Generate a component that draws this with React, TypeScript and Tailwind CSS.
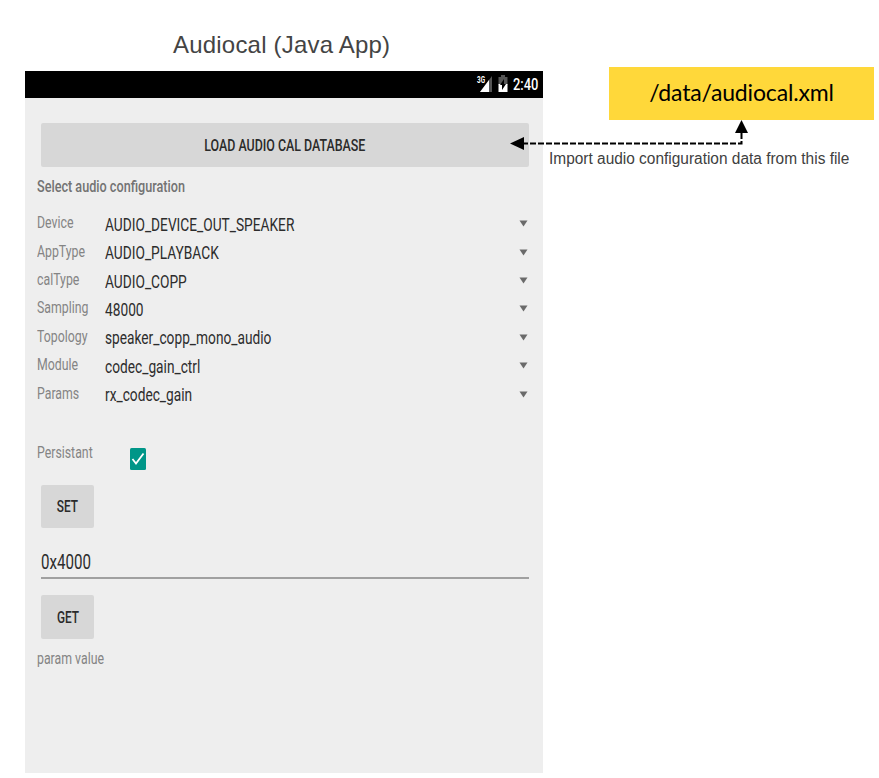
import React from "react";

const roboto = "font-[Roboto,'Liberation_Sans',sans-serif]";

const fields = [
  { label: "Device", value: "AUDIO_DEVICE_OUT_SPEAKER", height: "h-[28.5px]" },
  { label: "AppType", value: "AUDIO_PLAYBACK", height: "h-[28.5px]" },
  { label: "calType", value: "AUDIO_COPP", height: "h-[28px]" },
  { label: "Sampling", value: "48000", height: "h-[28.5px]" },
  { label: "Topology", value: "speaker_copp_mono_audio", height: "h-[28.5px]" },
  { label: "Module", value: "codec_gain_ctrl", height: "h-[28.5px]" },
  { label: "Params", value: "rx_codec_gain", height: "h-[28.5px]" },
];

function Label({ children }: { children: React.ReactNode }) {
  return (
    <span className="block origin-left scale-x-[0.77] whitespace-nowrap text-[16px] leading-5 text-[#848484]">
      {children}
    </span>
  );
}

function StatusBar() {
  return (
    <div className="flex h-[27px] items-center justify-end bg-black pr-[5px] text-white">
      <svg className="mr-[6px] h-[27px] w-[16px]" viewBox="0 0 16 27" aria-hidden="true">
        <path d="M16 5V21H4Z" fill="#555" />
        <path d="M13 9V21H4Z" fill="#fff" />
        <text x="1" y="12" fontSize="9" fontWeight="700" fill="#fff" fontFamily="Roboto, sans-serif" textLength="8" lengthAdjust="spacingAndGlyphs">3G</text>
      </svg>
      <svg className="mr-[5px] h-[27px] w-[10px]" viewBox="0 0 10 27" aria-hidden="true">
        <path d="M3 4h4v2h2.5v8H.5V6H3Z" fill="#555" />
        <path d="M.5 13h9v8h-9Z" fill="#fff" />
        <path d="M6 8v5h2l-4 6v-5H2Z" fill="#000" />
      </svg>
      <div className="w-[25px]">
        <span className="block origin-left scale-x-[0.76] whitespace-nowrap text-[17px] font-medium leading-[27px]">2:40</span>
      </div>
    </div>
  );
}

function PhoneScreen() {
  return (
    <main className={`flex h-[702px] w-[518px] flex-col bg-[#eee] ${roboto}`}>
      <StatusBar />
      <button className="ml-4 mt-[25px] flex h-[44px] w-[488px] items-center justify-center rounded-[2px] bg-[#d7d7d7] pt-[2px]">
        <span className="scale-x-[0.776] whitespace-nowrap text-[16px] font-medium text-[#2a2a2a]">LOAD AUDIO CAL DATABASE</span>
      </button>
      <h2 className="ml-3 mt-[10px] h-5 origin-left scale-x-[0.79] whitespace-nowrap text-[16px] font-medium leading-5 text-[#737373]">
        Select audio configuration
      </h2>
      <div className="ml-3 mt-4 flex flex-col">
        {fields.map((f) => (
          <div key={f.label} className={`flex items-start ${f.height}`}>
            <div className="w-[67.5px]">
              <Label>{f.label}</Label>
            </div>
            <div className="w-[414px] pt-[1.5px]">
              <span className="block origin-left scale-x-[0.762] whitespace-nowrap text-[18px] leading-5 text-[#2c2c2c]">{f.value}</span>
            </div>
            <svg className="mt-[7px] h-[7px] w-[9px]" viewBox="0 0 9 7" aria-hidden="true">
              <path d="M.5 .5h8l-4 6Z" fill="#6a6a6a" />
            </svg>
          </div>
        ))}
      </div>
      <div className="ml-3 mt-[31px] flex items-start">
        <div className="w-[93px]">
          <Label>Persistant</Label>
        </div>
        <svg className="mt-[5px] h-[22px] w-[16px]" viewBox="0 0 16 22" role="checkbox" aria-checked="true">
          <rect width="16" height="22" rx="1.5" fill="#009688" />
          <path d="M2.5 11L6 15.5L13.5 5.5" fill="none" stroke="#fff" strokeWidth="1.8" />
        </svg>
      </div>
      <button className="ml-4 mt-[15px] flex h-[43px] w-[53px] items-center justify-center rounded-[2px] bg-[#d7d7d7]">
        <span className="scale-x-[0.74] text-[16px] font-medium text-[#2a2a2a]">SET</span>
      </button>
      <div className="ml-4 mt-[22px] h-[29px] w-[488px] border-b-2 border-[#a0a0a0]">
        <span className="block origin-left scale-x-[0.755] whitespace-nowrap text-[20px] leading-6 text-[#2c2c2c]">0x4000</span>
      </div>
      <button className="ml-4 mt-[16px] flex h-[44px] w-[53px] items-center justify-center rounded-[2px] bg-[#d7d7d7] pt-[2px]">
        <span className="scale-x-[0.74] text-[16px] font-medium text-[#2a2a2a]">GET</span>
      </button>
      <div className="ml-3 mt-[10px]">
        <Label>param value</Label>
      </div>
    </main>
  );
}

export default function App() {
  return (
    <div className="relative flex h-[778px] w-[879px] overflow-hidden bg-white font-['Liberation_Sans',Arial,sans-serif]">
      <div className="ml-[25px] w-[518px]">
        <h1 className="flex h-[71px] items-center pl-[148px] pt-[19px] text-[24px] leading-7 tracking-[0.2px] text-[#444]">
          <span className="whitespace-nowrap">Audiocal (Java App)</span>
        </h1>
        <PhoneScreen />
      </div>
      <aside className="w-[336px] pt-[67px]">
        <div className="ml-[66px] flex h-[53px] w-[265px] items-center justify-center bg-[#ffd83a] font-[Lato,sans-serif] text-[23px] tracking-[-0.15px] text-black">
          <span className="whitespace-nowrap pb-[2px]">/data/audiocal.xml</span>
        </div>
        <p className="ml-[5.5px] mt-[29px] origin-left scale-x-[0.965] whitespace-nowrap text-[16px] leading-5 text-[#404040]">
          Import audio configuration data from this file
        </p>
      </aside>
      <svg className="absolute left-[510px] top-[120px] h-[32px] w-[240px]" viewBox="0 0 240 32" aria-hidden="true">
        <path d="M12 23.5H231.5V12" fill="none" stroke="#000" strokeWidth="2" strokeDasharray="6 2" />
        <path d="M0 23.5L14 17V30Z" />
        <path d="M231.5 0L238 13H225Z" />
      </svg>
    </div>
  );
}
